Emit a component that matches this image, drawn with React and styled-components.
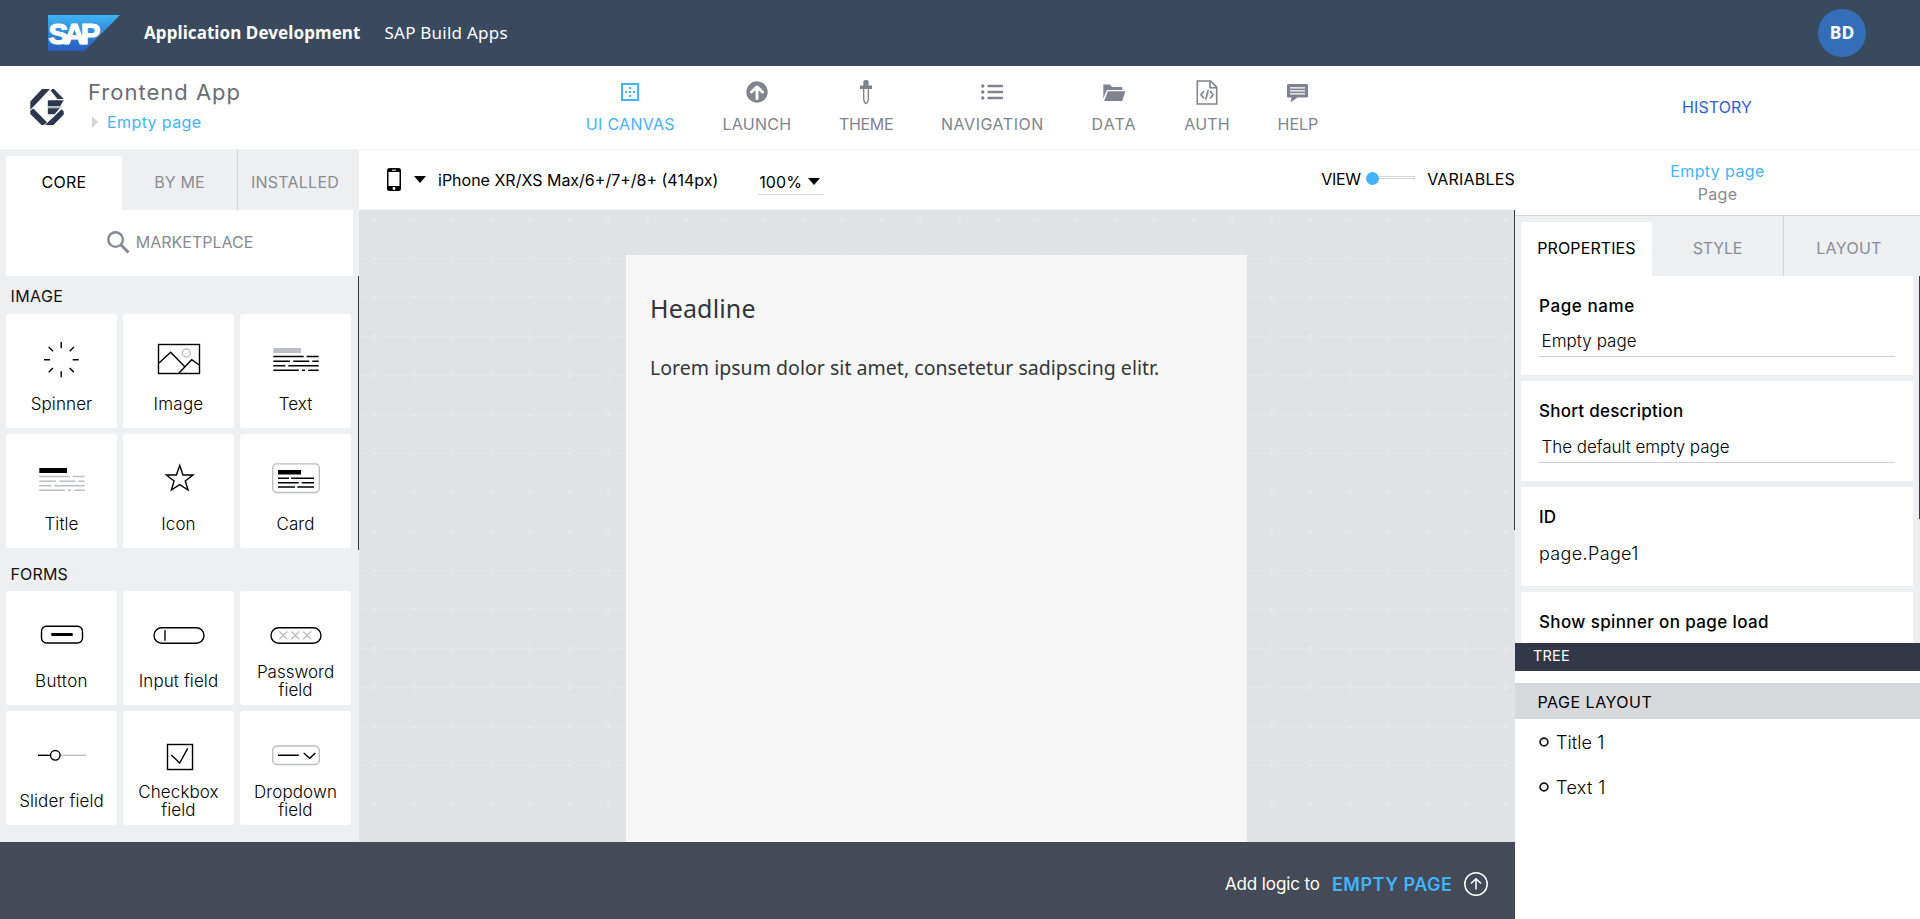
import React from "react";
import styled, { createGlobalStyle } from "styled-components";

const GlobalStyle = createGlobalStyle`
  * { box-sizing: border-box; }
  html, body { margin: 0; height: 100%; overflow: hidden; }
  body { font-family: Inter, "Open Sans", sans-serif; font-size: 16px; color: #000; background: #fff; }
  svg { display: block; overflow: visible; }
`;

const sapFont = `"Noto Sans", "Open Sans", sans-serif`;

const Text = styled.span`
  white-space: nowrap;
  letter-spacing: ${(p) => p.$ls ?? 0}px;
`;

/* ---------- shell ---------- */
const Shell = styled.div`
  display: flex;
  flex-direction: column;
  height: 919px;
  width: 1920px;
`;

const ShellBar = styled.header`
  height: 66px;
  flex: none;
  display: flex;
  align-items: center;
  padding: 0 54px 0 48px;
  background: #394a5f;
  color: #fff;
  font-family: ${sapFont};
  font-size: 17px;
`;
const ProductName = styled(Text)`
  font-weight: 700;
  margin: -2px 0 0 24px;
`;
const ProductArea = styled(Text)`
  margin: -2px 0 0 24px;
`;
const Avatar = styled.div`
  width: 48px;
  height: 48px;
  margin-left: auto;
  padding-bottom: 2px;
  border-radius: 50%;
  display: grid;
  place-items: center;
  background: #356eb8;
  font-weight: 700;
  font-size: 17.5px;
`;

/* ---------- app bar ---------- */
const AppBar = styled.div`
  height: 84px;
  flex: none;
  display: flex;
  align-items: center;
  padding-bottom: 2px;
  border-bottom: 1px solid #f4f5f6;
`;
const AppIdentity = styled.div`
  width: 562px;
  display: flex;
  align-items: center;
  padding-left: 30px;
`;
const AppTitles = styled.div`
  margin: -2px 0 0 24px;
`;
const AppName = styled.div`
  font-size: 22px;
  line-height: 32px;
  color: #6a6d76;
`;
const Crumb = styled.div`
  display: flex;
  align-items: center;
  gap: 9px;
  padding-left: 4px;
  line-height: 28px;
  color: #42b4fe;
`;
const ToolNav = styled.nav`
  display: flex;
  width: 1120px;
  margin-top: 2px;
`;
const ToolItem = styled.a`
  display: flex;
  flex-direction: column;
  align-items: center;
  gap: 9px;
  padding: 0 23.8px;
  line-height: 22px;
  color: ${(p) => (p.$active ? "#42b4fe" : "#80848e")};
`;
const HistoryLink = styled.a`
  color: #2e5fd0;
`;

/* ---------- workspace ---------- */
const Main = styled.div`
  flex: 1;
  min-height: 0;
  display: flex;
`;
const Workspace = styled.div`
  width: 1515px;
  display: flex;
  flex-direction: column;
`;
const WorkRow = styled.div`
  flex: 1;
  min-height: 0;
  display: flex;
`;
const Library = styled.aside`
  width: 359px;
  overflow: hidden;
  background: #eeeff1;
`;
const Tabs = styled.div`
  display: flex;
  height: 60px;
  padding: 6px 5px 0 6px;
  background: #eeeff1;
`;
const Tab = styled.div`
  width: ${(p) => p.$width}px;
  display: grid;
  place-items: center;
  margin-top: ${(p) => (p.$divided ? -6 : 0)}px;
  padding-top: ${(p) => (p.$divided ? 6 : 0)}px;
  padding-bottom: 3px;
  border-left: ${(p) => (p.$divided ? "1px solid #d3d5d9" : "0")};
  border-radius: ${(p) => (p.$active ? "3px 3px 0 0" : "0")};
  background: ${(p) => (p.$active ? "#fff" : "transparent")};
  color: ${(p) => (p.$active ? "#000" : "#888c95")};
`;
const Marketplace = styled.div`
  height: 66px;
  width: 347px;
  margin-left: 6px;
  padding: 0 0 2px 1px;
  display: flex;
  align-items: center;
  justify-content: center;
  gap: 6px;
  background: #fff;
  color: #868a93;
`;
const LibraryScroll = styled.div`
  height: ${(p) => p.$height}px;
  border-right: 1px solid ${(p) => (p.$thumb ? "#333848" : "transparent")};
`;
const SectionTitle = styled.h3`
  margin: 0;
  height: ${(p) => p.$height}px;
  padding: ${(p) => p.$top}px 0 0 10.5px;
  font-size: 16px;
  font-weight: 400;
  line-height: 20px;
  color: #111;
`;
const TileGrid = styled.div`
  display: grid;
  grid-template-columns: repeat(3, 111px);
  gap: 6px;
  padding-left: 6px;
`;
const Tile = styled.div`
  height: 114px;
  display: flex;
  flex-direction: column;
  align-items: center;
  padding-top: 25px;
  border-radius: 3px;
  background: #fff;
`;
const TileLabel = styled.div`
  height: 36px;
  margin-top: 7px;
  display: flex;
  flex-direction: column;
  align-items: center;
  justify-content: center;
  font-size: 17px;
  font-weight: 300;
  line-height: 18px;
  text-align: center;
`;

const Stage = styled.section`
  flex: 1;
  display: flex;
  flex-direction: column;
`;
const StageBar = styled.div`
  height: 60px;
  display: flex;
  align-items: center;
  padding-left: 28px;
  border-bottom: 1px solid #f4f5f6;
`;
const DevicePicker = styled.div`
  display: flex;
  align-items: center;
  gap: 13px;
`;
const DeviceName = styled(Text)`
  margin-left: 12px;
`;
const Zoom = styled.div`
  display: flex;
  align-items: center;
  gap: 6px;
  width: 66px;
  height: 25px;
  margin: 5px 0 0 40px;
  padding-left: 1px;
  border-bottom: 1px solid #d4d6da;
`;
const ModeSwitch = styled.div`
  display: flex;
  align-items: center;
  margin-left: auto;
  padding-bottom: 2px;
`;
const SwitchKnob = styled.span`
  width: 13px;
  height: 13px;
  margin-left: 5.5px;
  border-radius: 50%;
  background: #42b4fe;
`;
const SwitchTrack = styled.span`
  width: 36px;
  height: 3px;
  margin: -2px 12px 0 0;
  border: 1px solid #d5d6dd;
  border-left: 0;
`;
const Canvas = styled.div`
  flex: 1;
  display: flex;
  overflow: hidden;
  padding: 45px 0 0 267px;
  background-color: #e1e2e6;
  background-image:
    radial-gradient(circle at 15.5px 9.5px, #e7e8eb 0 1.4px, transparent 2.2px),
    linear-gradient(transparent 9px, #e3e4e8 9px 10px, transparent 10px),
    linear-gradient(90deg, transparent 15px, #e2e3e7 15px 16px, transparent 16px);
  background-size: 39px 39px;
`;
const Page = styled.article`
  width: 621px;
  padding: 0 24px;
  background: #f7f7f7;
  color: #32363a;
  font-family: ${sapFont};
`;
const Headline = styled.h1`
  margin: 34px 0 0;
  font-size: 25px;
  font-weight: 400;
  line-height: 38px;
`;
const Paragraph = styled.p`
  margin: 26px 0 0;
  font-size: 19.5px;
  line-height: 30px;
`;
const LogicBar = styled.footer`
  height: 77px;
  display: flex;
  align-items: center;
  justify-content: flex-end;
  padding: 7px 27px 0 0;
  background: #444a57;
  color: #fff;
  font-size: 17px;
`;
const LogicTarget = styled(Text)`
  margin: 0 11.5px 0 12px;
  font-size: 18px;
  font-weight: 600;
  color: #42b4fe;
`;

/* ---------- inspector ---------- */
const Inspector = styled.aside`
  width: 405px;
  display: flex;
  flex-direction: column;
`;
const InspectorFrame = styled.div`
  position: relative;
`;
const CanvasThumb = styled.span`
  position: absolute;
  left: -1px;
  top: 60px;
  width: 1px;
  height: 320px;
  background: #333848;
`;
const Selection = styled.div`
  height: 66px;
  padding-top: 10px;
  border-bottom: 1px solid #d5d6db;
  text-align: center;
  line-height: 23px;
  color: #42b4fe;
`;
const SelectionKind = styled.div`
  color: #868a93;
`;
const Properties = styled.div`
  height: 367px;
  overflow: hidden;
  display: flex;
  flex-direction: column;
  gap: 6px;
  padding-left: 6px;
  background: #eeeff1;
  position: relative;
`;
const ScrollThumb = styled.span`
  position: absolute;
  right: 0;
  top: 0;
  width: 1px;
  height: 243px;
  background: #333848;
`;
const PropertyCard = styled.div`
  flex: none;
  width: 392px;
  height: ${(p) => p.$height}px;
  padding: 20px 18px 0;
  background: #fff;
`;
const PropertyName = styled.div`
  font-size: 17px;
  font-weight: 500;
  line-height: 20px;
`;
const PropertyInput = styled.div`
  height: 26px;
  margin-top: ${(p) => p.$gap ?? 15}px;
  padding-left: 2.5px;
  border-bottom: 1px solid #d0d1d7;
  font-size: 17px;
  font-weight: 300;
  line-height: 20px;
`;
const PropertyValue = styled.div`
  margin-top: 16px;
  font-size: 18px;
  font-weight: 300;
  line-height: 22px;
`;
const TreeHeader = styled.div`
  height: 28px;
  padding-left: 18px;
  background: #333848;
  color: #fff;
  font-size: 14.5px;
  line-height: 25px;
`;
const TreeRoot = styled.div`
  height: 36px;
  margin: 12px 0 5px;
  padding: 1px 0 0 22.5px;
  background: #d8d9dd;
  line-height: 36px;
`;
const TreeNode = styled.div`
  height: 45px;
  display: flex;
  align-items: flex-start;
  gap: 7px;
  padding: 7px 0 0 24px;
  font-size: 18px;
  font-weight: 300;
  line-height: 24px;
`;
const TreeBullet = styled.svg`
  width: 10px;
  height: 10px;
  margin-top: 6px;
`;

/* ---------- drawings ---------- */
const SapLogo = () => (
  <svg width="72" height="36" viewBox="0 0 72 36">
    <defs>
      <linearGradient id="sap" x1="0" y1="0" x2="0" y2="1">
        <stop offset="0" stopColor="#3fb4f0" />
        <stop offset="0.5" stopColor="#2f86d8" />
        <stop offset="1" stopColor="#2a5cc0" />
      </linearGradient>
    </defs>
    <path d="M0 0H72L36.5 36H0Z" fill="url(#sap)" />
    <text x="0.5" y="28.6" fontFamily="Liberation Sans, sans-serif" fontWeight="700" fontSize="29.5" fill="#fff" stroke="#fff" strokeWidth="1.2" textLength="52" lengthAdjust="spacing">SAP</text>
  </svg>
);

const AppLogo = () => (
  <svg width="34" height="36" viewBox="0 0 34 36" fill="#2b374c">
    <path d="M12 0H20L4.5 16.5 0.3 20.8V12.5Z" />
    <path d="M20.6 1.4 22.3 0H24L33.8 10H27.5Z" />
    <path d="M17.8 11.2H33.6L30.3 17H17.8Z" />
    <path d="M17.8 17.3H31.5L30.6 19H17.8Z" fill="#a9afb9" />
    <path d="M17.8 19.3H29.6L24.6 25.2H17.8Z" />
    <path d="M3.3 19.4 17 33.2 13.7 36H11.5L0.3 25V21.8Z" />
    <path d="M31.6 20.2 33.8 22.4V25.5L23.5 36H15L24.8 26.8Z" />
  </svg>
);

const Caret = () => (
  <svg width="12" height="7" viewBox="0 0 12 7"><path d="M0 0H12L6 7Z" fill="#000" /></svg>
);

const toolIcons = {
  canvas: (
    <>
      <rect x="4" y="4" width="16" height="16" fill="none" stroke="currentColor" strokeWidth="2" />
      <path d="M7 11h2v2H7zM11 11h2v2h-2zM15 11h2v2h-2zM11 7h2v2h-2zM11 15h2v2h-2z" />
    </>
  ),
  launch: (
    <>
      <circle cx="12" cy="12" r="10.7" />
      <path d="M12 18.5V7.5M6.5 12 12 6.8 17.5 12" fill="none" stroke="#fff" strokeWidth="3" strokeLinecap="round" strokeLinejoin="round" />
    </>
  ),
  theme: (
    <>
      <path d="M9.3 2.5C9.3 .6 10.4 0 12 0s2.7 .6 2.7 2.5V5.5H18V9H6V5.5H9.3Z" />
      <path d="M9.7 9V18.5C9.7 21 11 23.5 12 23.5S14.300 21 14.300 18.500V9" fill="none" stroke="currentColor" strokeWidth="1.4" />
    </>
  ),
  navigation: (
    <>
      <circle cx="2.8" cy="6" r="1.7" />
      <circle cx="2.8" cy="12" r="1.7" />
      <circle cx="2.8" cy="18" r="1.7" />
      <path d="M8.6 6H21.8M8.6 12H21.8M8.6 18H21.8" fill="none" stroke="currentColor" strokeWidth="2.7" strokeLinecap="round" />
    </>
  ),
  data: (
    <path d="M1.3 4.5H8L10 7H20.3V10H4.8L1.3 18.5ZM5.8 11.3H23.3L20.3 21H2.2Z" />
  ),
  auth: (
    <g fill="none" stroke="currentColor" strokeWidth="1.6">
      <path d="M2.3 1H15.5L21.7 7.2V24H2.3Z" />
      <path d="M15 1V7.7H21.7" />
      <path d="M9 11 6 14.7 9 18.4M15 11 18 14.7 15 18.4M13.3 9.7 10.7 19.7" />
    </g>
  ),
  help: (
    <>
      <path d="M2.5 4H20.5C21.5 4 22 4.5 22 5.5V16C22 17 21.5 17.5 20.5 17.5H11.5L4.5 22.5 5.5 17.5H2.5C1.5 17.5 1 17 1 16V5.5C1 4.5 1.5 4 2.5 4Z" />
      <path d="M4 7.8H19M4 10.8H19M4 13.8H19" stroke="#fff" strokeWidth="1.2" />
    </>
  ),
};
const ToolIcon = ({ name }) => (
  <svg width="24" height="24" viewBox="0 0 24 24" fill="currentColor">{toolIcons[name]}</svg>
);

const MUTED = "#bcbec4";
const Lines = ({ head, body }) => (
  <>
    <rect x="3.3" y="9" width="27.7" height="5" fill={head} stroke="none" />
    <path stroke={body} strokeWidth="1.5" d="M3.3 17.6H33.7M36.7 17.6H48.7M3.3 22.2H20M23.3 22.2H39.3M42.3 22.2H48.7M3.3 26.7H15.3M18.3 26.7H48.7M3.3 31.3H28.7M32 31.3H35M38.3 31.3H48.7" />
  </>
);
const tileIcons = {
  Spinner: <path d="M25.2 3V9.3M25.2 32.3V38.3M8 20.7H14M36.7 20.7H42.7M12.7 8 17 12.2M33.7 12.2 37.9 8M12.7 33.2 17 29M33.7 29 37.9 33.2" />,
  Image: (
    <>
      <rect x="5.5" y="5.5" width="41" height="29" />
      <circle cx="33.3" cy="14" r="4" stroke={MUTED} />
      <path d="M6 24 17.7 13.3 31.5 27.5M26 34 38.7 20.7 46.5 26.3" />
    </>
  ),
  Text: <Lines head={MUTED} body="#000" />,
  Title: <Lines head="#000" body={MUTED} />,
  Icon: <path d="M26.7 6.500 30 16H40L32.300 21.900 35 31 26.700 25.600 18.400 31 21.100 21.900 13.300 16H23.400Z" />,
  Card: (
    <>
      <rect x="2.7" y="4.9" width="46.6" height="28.6" rx="4" stroke={MUTED} />
      <rect x="8" y="11" width="23" height="4.5" fill="#000" stroke="none" />
      <path d="M8 19.2H19M21 19.2H44M8 23.7H28.7M31.7 23.7H44M8 28H25M27.3 28H44" strokeWidth="1.5" />
    </>
  ),
  Button: (
    <>
      <rect x="5.5" y="10.3" width="41" height="16.7" rx="5" />
      <path d="M15.3 18.5H36.7" strokeWidth="3" />
    </>
  ),
  Input: (
    <>
      <rect x="1" y="11.7" width="50" height="15.6" rx="7.8" />
      <path d="M12 14.3V24.7" />
    </>
  ),
  Password: (
    <>
      <rect x="1" y="11.7" width="50" height="15.6" rx="7.8" />
      <path stroke={MUTED} d="M9.3 15.5 17.3 23.3M17.3 15.5 9.3 23.3M21.3 15.5 29.3 23.3M29.3 15.5 21.3 23.3M33.1 15.5 41.1 23.3M41.1 15.5 33.1 23.3" />
    </>
  ),
  Slider: (
    <>
      <path d="M2 19.3H14.3" />
      <path d="M24.3 19.3H50" stroke={MUTED} />
      <circle cx="19.3" cy="19.3" r="4.8" />
    </>
  ),
  Checkbox: (
    <>
      <rect x="14.5" y="8.5" width="25" height="25" />
      <path d="M18.3 19 26.7 27 34.7 12.3" />
    </>
  ),
  Dropdown: (
    <>
      <rect x="2.7" y="10" width="46.6" height="18.5" rx="4.5" stroke={MUTED} />
      <path d="M8 19.3H28.7M33.7 17 39.7 22.3 45.3 17" />
    </>
  ),
};
const TileIcon = ({ name }) => (
  <svg width="51" height="40" viewBox="0 0 51 40" fill="none" stroke="#000" strokeWidth="1.4">{tileIcons[name]}</svg>
);

const Bullet = () => (
  <TreeBullet viewBox="0 0 10 10" fill="none" stroke="#111" strokeWidth="1.7">
    <circle cx="5" cy="5" r="3.9" />
  </TreeBullet>
);

/* ---------- data ---------- */
const tools = [
  ["canvas", "UI CANVAS", 0.3],
  ["launch", "LAUNCH", 0.25],
  ["theme", "THEME", -0.3],
  ["navigation", "NAVIGATION", 0.55],
  ["data", "DATA", 1.1],
  ["auth", "AUTH", 0.2],
  ["help", "HELP", 0],
];
const imageTiles = [
  ["Spinner", ["Spinner"]],
  ["Image", ["Image"], 0.25],
  ["Text", ["Text"]],
  ["Title", ["Title"]],
  ["Icon", ["Icon"]],
  ["Card", ["Card"]],
];
const formTiles = [
  ["Button", ["Button"], 0.35],
  ["Input", ["Input field"]],
  ["Password", ["Password", "field"], 0],
  ["Slider", ["Slider field"]],
  ["Checkbox", ["Checkbox", "field"]],
  ["Dropdown", ["Dropdown", "field"]],
];

const Tiles = ({ items }) => (
  <TileGrid>
    {items.map(([icon, lines, ls]) => (
      <Tile key={icon}>
        <TileIcon name={icon} />
        <TileLabel>{lines.map((l) => <Text key={l} $ls={ls ?? 0.1}>{l}</Text>)}</TileLabel>
      </Tile>
    ))}
  </TileGrid>
);

export default function App() {
  return (
    <Shell>
      <GlobalStyle />
      <ShellBar>
        <SapLogo />
        <ProductName $ls={0.08}>Application Development</ProductName>
        <ProductArea $ls={0.24}>SAP Build Apps</ProductArea>
        <Avatar>BD</Avatar>
      </ShellBar>

      <AppBar>
        <AppIdentity>
          <AppLogo />
          <AppTitles>
            <AppName><Text $ls={1}>Frontend App</Text></AppName>
            <Crumb>
              <svg width="6" height="12" viewBox="0 0 6 12"><path d="M0 0 6 6 0 12Z" fill="#d3d5d9" /></svg>
              <Text $ls={0.4}>Empty page</Text>
            </Crumb>
          </AppTitles>
        </AppIdentity>
        <ToolNav>
          {tools.map(([icon, label, ls], i) => (
            <ToolItem key={icon} $active={i === 0}>
              <ToolIcon name={icon} />
              <Text $ls={ls}>{label}</Text>
            </ToolItem>
          ))}
        </ToolNav>
        <HistoryLink><Text $ls={0.1}>HISTORY</Text></HistoryLink>
      </AppBar>

      <Main>
        <Workspace>
          <WorkRow>
            <Library>
              <Tabs>
                <Tab $width={116} $active><Text $ls={0.25}>CORE</Text></Tab>
                <Tab $width={115}><Text $ls={0.1}>BY ME</Text></Tab>
                <Tab $width={115} $divided><Text $ls={0.25}>INSTALLED</Text></Tab>
              </Tabs>
              <Marketplace>
                <svg width="23" height="23" viewBox="0 0 23 23" fill="none" stroke="currentColor">
                  <circle cx="8.6" cy="8.6" r="7.3" strokeWidth="2.4" />
                  <path d="M13.8 13.8 21.5 21.5" strokeWidth="3" />
                </svg>
                <Text>MARKETPLACE</Text>
              </Marketplace>
              <LibraryScroll $height={274} $thumb>
                <SectionTitle $height={38} $top={10}><Text $ls={0.4}>IMAGE</Text></SectionTitle>
                <Tiles items={imageTiles} />
              </LibraryScroll>
              <LibraryScroll $height={292}>
                <SectionTitle $height={41} $top={14}><Text $ls={0.15}>FORMS</Text></SectionTitle>
                <Tiles items={formTiles} />
              </LibraryScroll>
            </Library>

            <Stage>
              <StageBar>
                <DevicePicker>
                  <svg width="14" height="23" viewBox="0 0 14 23">
                    <rect width="14" height="23" rx="2.5" />
                    <rect x="1.5" y="4" width="11" height="14" fill="#fff" />
                    <path d="M5 2.2H9" stroke="#fff" strokeWidth="1" />
                    <circle cx="7" cy="20.5" r="1.4" fill="#fff" />
                  </svg>
                  <Caret />
                </DevicePicker>
                <DeviceName>iPhone XR/XS Max/6+/7+/8+ (414px)</DeviceName>
                <Zoom>
                  <Text $ls={0.1}>100%</Text>
                  <Caret />
                </Zoom>
                <ModeSwitch>
                  <Text $ls={-0.3}>VIEW</Text>
                  <SwitchKnob />
                  <SwitchTrack />
                  <Text $ls={0.2}>VARIABLES</Text>
                </ModeSwitch>
              </StageBar>
              <Canvas>
                <Page>
                  <Headline><Text $ls={0.15}>Headline</Text></Headline>
                  <Paragraph><Text $ls={0.03}>Lorem ipsum dolor sit amet, consetetur sadipscing elitr.</Text></Paragraph>
                </Page>
              </Canvas>
            </Stage>
          </WorkRow>
          <LogicBar>
            <Text $ls={-0.1}>Add logic to</Text>
            <LogicTarget $ls={0.5}>EMPTY PAGE</LogicTarget>
            <svg width="24" height="24" viewBox="0 0 24 24" fill="none" stroke="#fff" strokeWidth="1.5">
              <circle cx="12" cy="12" r="11.2" />
              <path d="M12 17.5V7M7 11.5 12 6.7 17 11.5" />
            </svg>
          </LogicBar>
        </Workspace>

        <Inspector>
          <InspectorFrame>
            <CanvasThumb />
            <Selection>
              <Text $ls={0.4}>Empty page</Text>
              <SelectionKind><Text $ls={0.3}>Page</Text></SelectionKind>
            </Selection>
            <Tabs>
              <Tab $width={131} $active><Text $ls={0.1}>PROPERTIES</Text></Tab>
              <Tab $width={131}><Text $ls={-0.2}>STYLE</Text></Tab>
              <Tab $width={131} $divided><Text $ls={0.3}>LAYOUT</Text></Tab>
            </Tabs>
            <Properties>
              <ScrollThumb />
              <PropertyCard $height={99}>
                <PropertyName><Text $ls={0.6}>Page name</Text></PropertyName>
                <PropertyInput><Text $ls={0.05}>Empty page</Text></PropertyInput>
              </PropertyCard>
              <PropertyCard $height={100}>
                <PropertyName><Text $ls={0.25}>Short description</Text></PropertyName>
                <PropertyInput $gap={16}><Text $ls={-0.05}>The default empty page</Text></PropertyInput>
              </PropertyCard>
              <PropertyCard $height={99}>
                <PropertyName>ID</PropertyName>
                <PropertyValue><Text $ls={0.35}>page.Page1</Text></PropertyValue>
              </PropertyCard>
              <PropertyCard $height={99}>
                <PropertyName><Text $ls={0.37}>Show spinner on page load</Text></PropertyName>
              </PropertyCard>
            </Properties>
          </InspectorFrame>
          <TreeHeader><Text $ls={0.2}>TREE</Text></TreeHeader>
          <TreeRoot><Text $ls={0.5}>PAGE LAYOUT</Text></TreeRoot>
          <TreeNode><Bullet /><Text $ls={0.1}>Title 1</Text></TreeNode>
          <TreeNode><Bullet /><Text $ls={0.4}>Text 1</Text></TreeNode>
        </Inspector>
      </Main>
    </Shell>
  );
}
